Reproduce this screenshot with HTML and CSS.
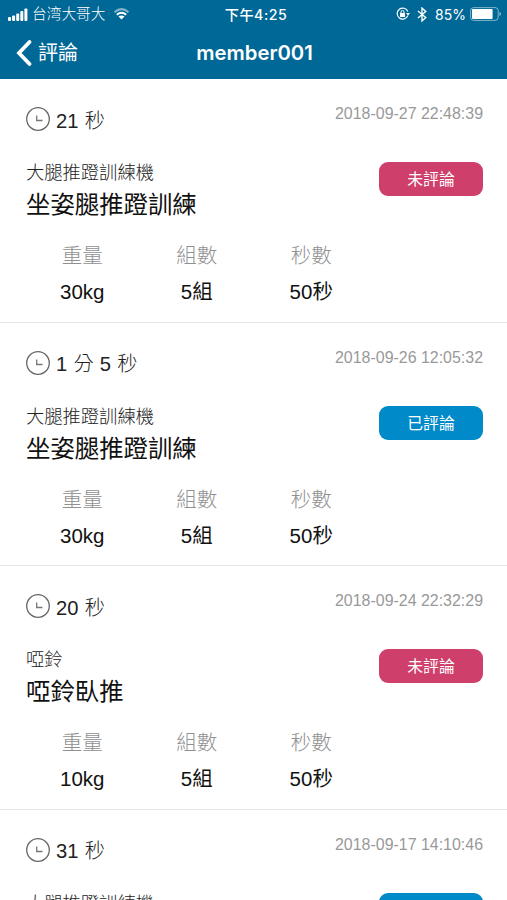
FILE: index.html
```html
<!DOCTYPE html>
<html lang="zh-Hant">
<head>
    <meta charset="UTF-8">
    <meta name="viewport" content="width=device-width, initial-scale=1.0">
    <title>評論</title>
    <link rel="stylesheet" href="styles.css">
</head>
<body>
    <svg width="0" height="0" class="sprite">
        <symbol id="clock" viewBox="0 0 24 24">
            <circle cx="12" cy="12" r="11.3" fill="none" stroke="#666" stroke-width="1.3"/>
            <path d="M10.7 8.5v5h5.8" fill="none" stroke="#777" stroke-width="1.3"/>
        </symbol>
    </svg>

    <header class="header">
        <div class="status-bar">
            <div class="status-left">
                <svg class="signal" viewBox="0 0 20 13" fill="#fff">
                    <rect x="0" y="9" width="3" height="4" rx="1"/>
                    <rect x="4.1" y="7.4" width="3" height="5.6" rx="1"/>
                    <rect x="8.2" y="5.4" width="3" height="7.6" rx="1"/>
                    <rect x="12.3" y="3" width="3" height="10" rx="1"/>
                    <rect x="16.4" y="0.5" width="3" height="12.5" rx="1"/>
                </svg>
                <span class="carrier">台湾大哥大</span>
                <svg class="wifi" viewBox="0 0 16 12" fill="none" stroke="#fff" stroke-width="2">
                    <path d="M1 4.2Q8-2 15 4.2" opacity="0.5"/>
                    <path d="M3.3 6.8Q8 2.8 12.7 6.8"/>
                    <path d="M5 8.6Q8 6.2 11 8.6L8 11.6Z" fill="#fff" stroke="none"/>
                </svg>
            </div>
            <div class="status-time">下午4:25</div>
            <div class="status-right">
                <svg class="lock" viewBox="0 0 14 14">
                    <path d="M11.8 8.6A5.5 5.5 0 1 1 11.8 4.5" fill="none" stroke="#fff" stroke-width="1.2"/>
                    <path d="M10 6h4l-2 2.8z" fill="#fff"/>
                    <rect x="4" y="6" width="5" height="4" rx="0.5" fill="#fff"/>
                    <path d="M5 6.4V5a1.5 1.5 0 0 1 3 0v1.4" fill="none" stroke="#fff"/>
                </svg>
                <svg class="bluetooth" viewBox="0 0 9 14" fill="none" stroke="#fff" stroke-width="1.3">
                    <path d="M0.7 3.8l7.3 6-3.5 3.2V1l3.5 3.2-7.3 6"/>
                </svg>
                <span class="percent">85%</span>
                <svg class="battery" viewBox="0 0 32 14">
                    <rect x="0.6" y="0.6" width="27.6" height="12.8" rx="3" fill="none" stroke="#fff" stroke-opacity="0.5"/>
                    <rect x="2" y="2" width="20.6" height="10" rx="1" fill="#fff"/>
                    <path d="M29.5 4.8q3 2.2 0 4.4z" fill="#fff" opacity="0.6"/>
                </svg>
            </div>
        </div>
        <nav class="nav">
            <a class="back">
                <svg class="chevron" viewBox="0 0 16 26">
                    <path d="M13.5 2L3 13l10.5 11" fill="none" stroke="#fff" stroke-width="3.8" stroke-linecap="round" stroke-linejoin="miter"/>
                </svg>
                評論
            </a>
            <h1>member001</h1>
        </nav>
    </header>

    <main class="records">
        <section class="record">
            <div class="top">
                <div class="duration"><svg class="clock"><use href="#clock"/></svg>21 秒</div>
                <time class="date">2018-09-27 22:48:39</time>
            </div>
            <div class="exercise">
                <div>
                    <p class="machine">大腿推蹬訓練機</p>
                    <h2>坐姿腿推蹬訓練</h2>
                </div>
                <span class="tag pending">未評論</span>
            </div>
            <dl class="stats">
                <div><dt>重量</dt><dd>30kg</dd></div>
                <div><dt>組數</dt><dd>5組</dd></div>
                <div><dt>秒數</dt><dd>50秒</dd></div>
            </dl>
        </section>

        <section class="record">
            <div class="top">
                <div class="duration"><svg class="clock"><use href="#clock"/></svg>1 分 5 秒</div>
                <time class="date">2018-09-26 12:05:32</time>
            </div>
            <div class="exercise">
                <div>
                    <p class="machine">大腿推蹬訓練機</p>
                    <h2>坐姿腿推蹬訓練</h2>
                </div>
                <span class="tag done">已評論</span>
            </div>
            <dl class="stats">
                <div><dt>重量</dt><dd>30kg</dd></div>
                <div><dt>組數</dt><dd>5組</dd></div>
                <div><dt>秒數</dt><dd>50秒</dd></div>
            </dl>
        </section>

        <section class="record">
            <div class="top">
                <div class="duration"><svg class="clock"><use href="#clock"/></svg>20 秒</div>
                <time class="date">2018-09-24 22:32:29</time>
            </div>
            <div class="exercise">
                <div>
                    <p class="machine">啞鈴</p>
                    <h2>啞鈴臥推</h2>
                </div>
                <span class="tag pending">未評論</span>
            </div>
            <dl class="stats">
                <div><dt>重量</dt><dd>10kg</dd></div>
                <div><dt>組數</dt><dd>5組</dd></div>
                <div><dt>秒數</dt><dd>50秒</dd></div>
            </dl>
        </section>

        <section class="record">
            <div class="top">
                <div class="duration"><svg class="clock"><use href="#clock"/></svg>31 秒</div>
                <time class="date">2018-09-17 14:10:46</time>
            </div>
            <div class="exercise">
                <div>
                    <p class="machine">大腿推蹬訓練機</p>
                </div>
                <span class="tag done">已評論</span>
            </div>
        </section>
    </main>
</body>
</html>
```

FILE: styles.css
```css
* {
    margin: 0;
    padding: 0;
    box-sizing: border-box;
}

body {
    height: 900px;
    overflow: hidden;
    background: #fff;
    color: #111;
    font-family: "Liberation Sans", "Noto Sans CJK TC", sans-serif;
}

.sprite {
    display: block;
}

.header {
    height: 79px;
    background: #006896;
    color: #fff;
}

.status-bar {
    display: grid;
    grid-template-columns: 1fr auto 1fr;
    align-items: center;
    height: 27px;
    padding: 0 5px 0 8px;
    font-size: 14.7px;
    line-height: 27px;
}

.status-left,
.status-right {
    display: flex;
    align-items: center;
}

.status-right {
    justify-content: flex-end;
}

.signal {
    width: 20px;
    height: 13px;
    margin-right: 4px;
}

.carrier {
    padding-top: 1px;
    font-weight: 300;
}

.wifi {
    width: 17px;
    height: 12px;
    margin-left: 8px;
}

.status-time {
    padding-left: 2px;
    font-family: Inter, "Noto Sans CJK TC", sans-serif;
    font-size: 14.2px;
    font-weight: 500;
    letter-spacing: 0.5px;
}

.lock {
    width: 14px;
    height: 14px;
    margin-right: 7px;
}

.bluetooth {
    width: 10px;
    height: 15px;
    margin-right: 8px;
}

.percent {
    font-family: Inter, sans-serif;
    font-size: 14px;
    margin-right: 4px;
}

.battery {
    width: 32px;
    height: 14px;
}

.nav {
    display: grid;
    grid-template-columns: 1fr auto 1fr;
    align-items: center;
    height: 52px;
    padding: 0 14px 0 16px;
}

.back {
    display: flex;
    align-items: center;
    gap: 6px;
    font-size: 20px;
    line-height: 50px;
}

.chevron {
    width: 16px;
    height: 26px;
}

.nav h1 {
    font-family: Inter, sans-serif;
    font-size: 20.3px;
    font-weight: 600;
    line-height: 50px;
}

.record {
    height: 243.5px;
    padding: 23px 24px 0 26px;
    border-bottom: 1px solid #e4e4e4;
}

.top {
    display: flex;
    justify-content: space-between;
    height: 58px;
}

.duration {
    display: flex;
    align-items: center;
    height: 34px;
    font-size: 20.2px;
    font-weight: 300;
    word-spacing: 0.6px;
    color: #222;
}

.clock {
    width: 24px;
    height: 24px;
    margin-right: 6px;
}

.date {
    font-size: 15.95px;
    line-height: 24px;
    color: #999;
}

.exercise {
    display: flex;
    justify-content: space-between;
    height: 81px;
}

.machine {
    font-size: 18.3px;
    font-weight: 300;
    line-height: 26px;
    color: #222;
}

.exercise h2 {
    font-size: 24.4px;
    font-weight: 400;
    line-height: 38px;
    color: #111;
}

.tag {
    width: 104px;
    height: 34px;
    margin-top: 2px;
    border-radius: 9px;
    font-size: 15.8px;
    line-height: 35px;
    text-align: center;
    color: #fff;
}

.pending {
    background: #cf3f6c;
}

.done {
    background: #008ac9;
}

.stats {
    display: grid;
    grid-template-columns: repeat(3, 114.5px);
    margin-left: -1px;
    text-align: center;
    font-size: 20.5px;
}

.stats dt {
    font-weight: 300;
    line-height: 30px;
    color: #909090;
}

.stats dd {
    line-height: 42px;
    color: #111;
}
```
